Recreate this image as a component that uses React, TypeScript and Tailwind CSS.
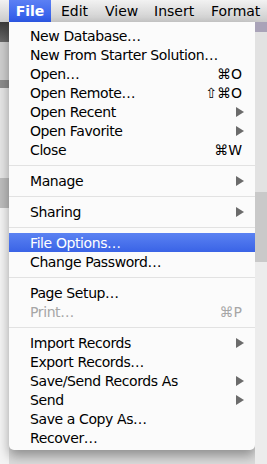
import React from 'react';

type Item =
  | { kind: 'sep' }
  | { kind: 'item'; label: string; shortcut?: string; submenu?: boolean; disabled?: boolean; active?: boolean };

const items: Item[] = [
  { kind: 'item', label: 'New Database…' },
  { kind: 'item', label: 'New From Starter Solution…' },
  { kind: 'item', label: 'Open…', shortcut: '⌘O' },
  { kind: 'item', label: 'Open Remote…', shortcut: '⇧⌘O' },
  { kind: 'item', label: 'Open Recent', submenu: true },
  { kind: 'item', label: 'Open Favorite', submenu: true },
  { kind: 'item', label: 'Close', shortcut: '⌘W' },
  { kind: 'sep' },
  { kind: 'item', label: 'Manage', submenu: true },
  { kind: 'sep' },
  { kind: 'item', label: 'Sharing', submenu: true },
  { kind: 'sep' },
  { kind: 'item', label: 'File Options…', active: true },
  { kind: 'item', label: 'Change Password…' },
  { kind: 'sep' },
  { kind: 'item', label: 'Page Setup…' },
  { kind: 'item', label: 'Print…', shortcut: '⌘P', disabled: true },
  { kind: 'sep' },
  { kind: 'item', label: 'Import Records', submenu: true },
  { kind: 'item', label: 'Export Records…' },
  { kind: 'item', label: 'Save/Send Records As', submenu: true },
  { kind: 'item', label: 'Send', submenu: true },
  { kind: 'item', label: 'Save a Copy As…' },
  { kind: 'item', label: 'Recover…' },
];

const font = { fontFamily: '"Lucida Grande", "DejaVu Sans", sans-serif' };

function Arrow() {
  return (
    <svg width="8" height="10" viewBox="0 0 8 10" className="block">
      <path d="M0 0 L8 5 L0 10 Z" fill="#6b6b6b" />
    </svg>
  );
}

function MenuRow({ item }: { item: Item }) {
  if (item.kind === 'sep') {
    return (
      <div className="h-[12px] flex items-center">
        <div className="h-px w-full bg-[#e2e2e2]" />
      </div>
    );
  }
  const text = item.active ? 'text-white' : item.disabled ? 'text-[#a6a6a6]' : 'text-black';
  return (
    <div
      className={`h-[19px] flex items-center justify-between pl-[21px] pr-[11px] ${text} ${
        item.active ? 'bg-gradient-to-b from-[#5b82f2] to-[#3a63e6]' : ''
      }`}
    >
      <span className="text-[14px] leading-none whitespace-nowrap tracking-[-0.4px]">{item.label}</span>
      {item.shortcut && <span className="text-[14px] leading-none mr-[2px]">{item.shortcut}</span>}
      {item.submenu && <Arrow />}
    </div>
  );
}

export default function App() {
  return (
    <div className="w-[267px] h-[464px] overflow-hidden bg-[#dcdcdc] flex flex-col" style={font}>
      <div className="h-[22px] flex items-center bg-gradient-to-b from-[#f2f2f2] to-[#cbcbcb] text-[14px] text-black whitespace-nowrap">
        <div className="ml-[9px] w-[42px] h-full flex items-center justify-center text-white font-bold bg-gradient-to-b from-[#5c80f4] to-[#2d58e8]">
          File
        </div>
        <span className="ml-[10px] w-[44px]">Edit</span>
        <span className="w-[49px]">View</span>
        <span className="w-[57px]">Insert</span>
        <span>Format</span>
      </div>
      <div className="flex flex-1">
        <div className="w-[9px] flex flex-col">
          <div className="h-[20px] bg-gradient-to-b from-[#3a3a3a] to-[#6a6a6a]" />
          <div className="h-[38px] bg-[#cfcfcf]" />
          <div className="h-[8px] bg-[#8c8c8c]" />
          <div className="h-[90px] bg-[#e6e6e6]" />
          <div className="h-[30px] bg-[#bdbdbd]" />
          <div className="flex-1 bg-[#f4f4f4]" />
        </div>
        <div className="w-[246px] self-start rounded-b-[5px] bg-[#fbfbfb] pt-[4px] pb-[3px] shadow-[0_6px_12px_rgba(0,0,0,0.35)]">
          {items.map((it, i) => (
            <MenuRow key={i} item={it} />
          ))}
        </div>
        <div className="flex-1 flex flex-col">
          <div className="h-[10px] bg-[#a9a3b8]" />
          <div className="h-[160px] bg-[#e2e2e2]" />
          <div className="h-[70px] bg-[#c9c9c9]" />
          <div className="flex-1 bg-[#ececec]" />
        </div>
      </div>
    </div>
  );
}
